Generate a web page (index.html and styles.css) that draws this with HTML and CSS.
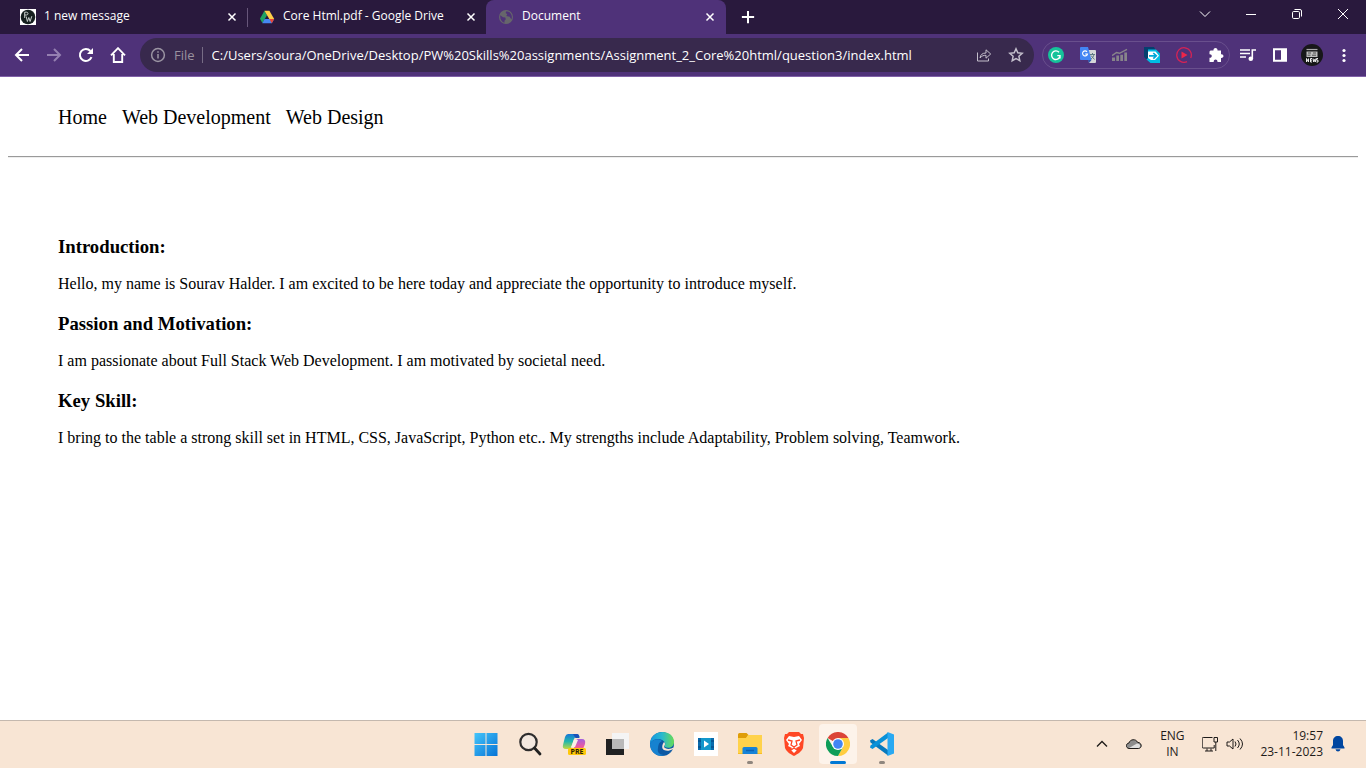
FILE: index.html
```html
<!DOCTYPE html>
<html lang="en">
<head>
<meta charset="utf-8">
<meta name="viewport" content="width=device-width, initial-scale=1">
<title>Document</title>
<link rel="stylesheet" href="styles.css">
</head>
<body>
<div class="desktop">
  <header class="browser">
    <div class="tabstrip">
      <div class="tab">
        <svg class="icon" viewBox="0 0 16 16"><path fill="#fff" d="M0 0h16v16H0z"/><circle cx="8" cy="8" r="7.3" fill="#16201f"/><path d="M4.700 9V3.200h1.800c2 0 2 2.800 0 2.800H4.700M6.200 7.500l1.200 5 1.400-4 1.300 4 1.700-5.300" fill="none" stroke="#c9cfcd" stroke-width="1"/></svg>
        <span class="tab-title">1 new message</span>
        <button class="tab-close" aria-label="Close 1 new message"><svg viewBox="0 0 16 16"><path d="M4.500 4.500l7 7M11.500 4.500l-7 7"/></svg></button>
      </div>
      <div class="tab tab-divided">
        <svg class="icon" viewBox="0 0 16 16"><path fill="#1fa463" d="M5.400 1.800 1 9.800l2.400 4.300L8 6.300z"/><path fill="#ffcf48" d="M5.400 1.800h5l4.800 8.300h-4.900z"/><path fill="#4688f4" d="M5.600 10.100h9.600l-2.400 4.100H3.300z"/><path fill="#ea4335" d="M10.400 10.100h4.800l-2.400 4.100z"/></svg>
        <span class="tab-title">Core Html.pdf - Google Drive</span>
        <button class="tab-close" aria-label="Close Core Html.pdf"><svg viewBox="0 0 16 16"><path d="M4.500 4.500l7 7M11.500 4.500l-7 7"/></svg></button>
      </div>
      <div class="tab tab-active">
        <svg class="icon" viewBox="0 0 16 16"><circle cx="8" cy="8" r="7" fill="#66666b"/><path d="M2.300 6.200 5 8.300l2.300.3.500 1.700-1.300 1.400v2.100C3.500 13.100 1.800 10 2.300 6.200zM8.400 2.200 7.600 4 9.300 5.200l-1 1.700 3.400.9 1.700 2.600c1.500-3.600-.6-8-5-8.200z" fill="#4f3279"/></svg>
        <span class="tab-title">Document</span>
        <button class="tab-close" aria-label="Close Document"><svg viewBox="0 0 16 16"><path d="M4.500 4.500l7 7M11.500 4.500l-7 7"/></svg></button>
      </div>
      <button class="new-tab" aria-label="New tab"><svg viewBox="0 0 16 16"><path d="M8 1v14M1 8h14" stroke-width="2.300"/></svg></button>
      <div class="window-controls">
        <button aria-label="Search tabs"><svg viewBox="0 0 16 16"><path d="M3 5.500l5 5 5-5"/></svg></button>
        <button aria-label="Minimize"><svg viewBox="0 0 16 16"><path d="M3 8.500h10"/></svg></button>
        <button aria-label="Restore"><svg viewBox="0 0 16 16"><rect x="3.500" y="5.500" width="7" height="7" rx="1.200"/><path d="M5.500 3.500H11q1.500 0 1.500 1.500v5.500"/></svg></button>
        <button aria-label="Close"><svg viewBox="0 0 16 16"><path d="M3 3l10 10M13 3 3 13"/></svg></button>
      </div>
    </div>
    <div class="toolbar">
      <div class="nav-buttons">
        <button aria-label="Back"><svg viewBox="0 0 16 16"><path d="M15 8H2M8 2 2 8l6 6" stroke-width="2"/></svg></button>
        <button class="dim" aria-label="Forward"><svg viewBox="0 0 16 16"><path d="M1 8h13M8 2l6 6-6 6" stroke-width="2"/></svg></button>
        <button aria-label="Reload"><svg viewBox="0 0 16 16"><path d="M13.500 10.200A6 6 0 1 1 12.400 4" stroke-width="2"/><path class="solid" d="M15 1v6H9z"/></svg></button>
        <button aria-label="Home"><svg viewBox="0 0 16 16"><path d="M1 8.300 8 1.200l7 7.100M3.800 7v8h8.400V7" stroke-width="1.900"/></svg></button>
      </div>
      <div class="omnibox">
        <svg class="icon info" viewBox="0 0 16 16"><circle cx="8" cy="8" r="6.400"/><path d="M8 7v4.500M8 4.200v1.600"/></svg>
        <label class="scheme" for="url">File</label>
        <input class="url" id="url" type="text" value="C:/Users/soura/OneDrive/Desktop/PW%20Skills%20assignments/Assignment_2_Core%20html/question3/index.html">
        <button aria-label="Share"><svg viewBox="0 0 16 16"><path d="M1.500 5.500V14h11v-2.500M4 11c.5-3.300 2.300-5 6-5V2.800L14.700 7 10 11.200V8.300C7.500 8.200 5.700 9 4 11z"/></svg></button>
        <button aria-label="Bookmark"><svg viewBox="0 0 16 16"><path d="M8 1.800l1.800 4 4.400.5-3.300 3 .9 4.400L8 11.500l-3.800 2.200.9-4.400-3.300-3 4.400-.5z" stroke-width="1.500"/></svg></button>
      </div>
      <div class="extensions">
        <button aria-label="Grammar checker"><svg viewBox="0 0 16 16"><circle cx="8" cy="8" r="8" fill="#15c39a" stroke="none"/><path d="M11 5.200a4.300 4.300 0 1 0 1 4.300V8.600H9.300M12 8.600v3" stroke-width="1.400"/></svg></button>
        <button aria-label="Translate"><svg viewBox="0 0 16 16" class="art"><path fill="#d5d7d8" d="M7 3h8q1 0 1 1v11q0 1-1 1H9z"/><path fill="#4285f4" d="M1 0h7l3.500 13H1q-1 0-1-1V1q0-1 1-1z"/><path fill="#2855ae" d="m8 13 3.500 0L9 16z"/><path d="M7 4.800A2.500 2.500 0 1 0 7.500 7H5.200" fill="none" stroke="#fff" stroke-width="1.100"/><path d="M10 7.500h5M12.500 6v1.500M14 7.500c-.5 2-1.500 3.500-3.300 4.700M11 8.500l3.500 4" fill="none" stroke="#607b84"/></svg></button>
        <button aria-label="Analytics"><svg viewBox="0 0 16 16" class="art"><path fill="#87848a" d="M0 10.500h3V14H0zM4.300 8.500h2.700V14H4.300zM8.300 7.800H11V14H8.300zM12.300 5.500H15V14h-2.700z"/><path d="M0 8.700 4.500 5.500l3 .8 7.500-4" fill="none" stroke="#87848a" stroke-width="1.500"/></svg></button>
        <button aria-label="Screen share"><svg viewBox="0 0 16 16" class="art"><path fill="#063f6e" d="M0 0h10l2 4-8 8H2L0 10z"/><path fill="#00bde3" d="M4 2.500h8l4 4V16H6.500L2.500 12.500 4 11z"/><path fill="#fff" d="M4 4.500h7.500L15 8.800l-4 4.200H7l-3-2z"/><path d="M5 8.800h7M9.300 6l3 2.800-3 2.800" fill="none" stroke="#00a9d8" stroke-width="1.700"/></svg></button>
        <button aria-label="Video recorder"><svg viewBox="0 0 16 16" class="art"><path d="M11 14.700A7.300 7.300 0 1 1 14.700 11" fill="none" stroke="#d42355" stroke-width="1.300"/><path fill="#ef2549" d="M5.500 4.500 11.500 8l-6 3.500z"/></svg></button>
        <button aria-label="Extensions"><svg viewBox="0 0 16 16" class="art"><path fill="#fff" d="M2.500 3.500h3C5 0 10 0 9.500 3.500H13v3.700c3.300-.4 3.300 4.100 0 3.800V15H9.500c.2-3.400-4-3.400-3.800 0H1.500v-4.300c3 .2 3-3.800 0-3.500V4.500z"/></svg></button>
      </div>
      <div class="browser-actions">
        <button aria-label="Media controls"><svg viewBox="0 0 16 16" class="art"><path d="M0 3h10M0 6.500h10M0 10h6M12.300 12V3H16" fill="none" stroke="#fff" stroke-width="1.600"/><circle cx="10.800" cy="11.800" r="2.300" fill="#fff"/></svg></button>
        <button aria-label="Side panel"><svg viewBox="0 0 16 16"><path d="M2 2.300h12v11.400H2z" stroke-width="2"/><path class="solid" d="M9 2h5v12H9z"/></svg></button>
        <button aria-label="Profile"><svg class="avatar" viewBox="0 0 22 22"><circle cx="11" cy="11" r="11" fill="#171719"/><path d="M5.500 5.500h11" stroke="#aaa" stroke-width="1.200"/><path fill="#bdbdbd" d="M5.500 7.500h11V13h-11z"/><path d="M7 9h3M12 9h3M6.500 11.200h3M11 11.200h4" stroke="#444" stroke-width=".9"/><path d="M5.500 18v-3.500l2 3.500v-3.500M11 14.500H9.500V18H11M9.500 16.200H11M12 14.500l.7 3.500.8-2.500.8 2.500.6-3.500M17 14.500h-1.400v1.700H17V18h-1.500" fill="none" stroke="#eee"/></svg></button>
        <button aria-label="Menu"><svg viewBox="0 0 16 16" class="art"><circle cx="8" cy="3.500" r="1.600" fill="#fff"/><circle cx="8" cy="8.500" r="1.600" fill="#fff"/><circle cx="8" cy="13.500" r="1.600" fill="#fff"/></svg></button>
      </div>
    </div>
  </header>

  <main class="page">
    <nav class="site-nav">
      <a href="#home">Home</a>
      <a href="#development">Web Development</a>
      <a href="#design">Web Design</a>
    </nav>
    <hr class="rule">
    <section class="article">
      <h3>Introduction:</h3>
      <p>Hello, my name is Sourav Halder. I am excited to be here today and appreciate the opportunity to introduce myself.</p>
      <h3>Passion and Motivation:</h3>
      <p>I am passionate about Full Stack Web Development. I am motivated by societal need.</p>
      <h3>Key Skill:</h3>
      <p>I bring to the table a strong skill set in HTML, CSS, JavaScript, Python etc.. My strengths include Adaptability, Problem solving, Teamwork.</p>
    </section>
  </main>

  <footer class="taskbar">
    <div class="apps">
      <button aria-label="Start"><svg viewBox="0 0 24 24"><defs><linearGradient id="win" x1="0" y1="0" x2="1" y2="1"><stop stop-color="#45c5fa"/><stop offset="1" stop-color="#0673d6"/></linearGradient></defs><path fill="url(#win)" d="M.5 1h11v11H.5zM12.500 1h11v11h-11zM.5 13h11v11H.5zM12.500 13h11v11h-11z"/></svg></button>
      <button aria-label="Search"><svg viewBox="0 0 24 24"><circle cx="10.500" cy="10" r="8.200" fill="#f3e8df" stroke="#2e2d2d" stroke-width="2.200"/><path d="m16.500 16 5.500 6" stroke="#222" stroke-width="2.800" stroke-linecap="round"/></svg></button>
      <button aria-label="Copilot"><svg viewBox="0 0 24 24"><defs><linearGradient id="co1" x1="0" y1="0" x2="0" y2="1"><stop stop-color="#1776d8"/><stop offset=".5" stop-color="#22b7ad"/><stop offset="1" stop-color="#c0d83f"/></linearGradient><linearGradient id="co2" x1="0" y1="0" x2="0" y2="1"><stop stop-color="#a260df"/><stop offset=".6" stop-color="#ee5a9e"/><stop offset="1" stop-color="#fb993e"/></linearGradient></defs><path fill="url(#co1)" d="M6 2h9q2 0 2.500 3h-3q-2 0-3 3l-2 7q-1 2-3 2H4q-4 0-3-4L3 5q1-3 3-3z"/><path fill="#1c51b7" d="M11 2h4q2 0 2.500 4h-4z"/><path fill="url(#co2)" d="M16 7h4q4 0 3 5l-2 5q-1 3-3 3H9q2-1 3-4l2-7q.5-2 2-2z"/><path fill="#faf0e8" d="m12 8 4 0-3 7H9z"/><rect x="6" y="16" width="18" height="7" rx="1.500" fill="#ffc80a"/><text class="copilot-tag" x="15" y="22" text-anchor="middle">PRE</text></svg></button>
      <button aria-label="Task view"><svg viewBox="0 0 24 24"><path fill="#202122" d="M0 7h18v16H0z"/><path fill="#f4f4f4" d="M6 1h17v16H6z"/><path fill="#b9b9b9" d="M6 7h12v10H6z"/></svg></button>
      <button aria-label="Edge"><svg viewBox="0 0 24 24"><defs><linearGradient id="ed" x2="1"><stop stop-color="#1495df"/><stop offset=".5" stop-color="#29b9cf"/><stop offset="1" stop-color="#67dc55"/></linearGradient></defs><circle cx="12" cy="12" r="12" fill="#0c59a4"/><path fill="url(#ed)" d="M0 12C1-4 24-3 24 10c0 5-5 7-9 5-2-1 1-2 0-4C13 6 3 5 0 12z"/><path fill="#1682d0" d="M0 12c2-5 9-6 12-3-5 2-5 9 0 12l3 2C6 26 0 19 0 12z"/><path fill="#f8e5d4" d="M14 10c3 3-2 4 1 6 3 1.500 6 1 8.500-.5l.5 2-4 3c-7 0-10-5-6-10.500z"/><path fill="#0c59a4" d="M11 11c-2 7 6 10 12 6-4 8-17 8-15-1q.5-3 3-5z"/></svg></button>
      <button aria-label="Media editor"><svg viewBox="0 0 24 24"><path fill="#fff" d="M0 0h24v24H0z"/><path fill="#0a6bad" d="M4 6h16v12H4z"/><path fill="#1297cb" d="M7 6h10v12H7z"/><path fill="#075693" d="M4 8h3v2H4zM4 14h3v2H4zM17 8h3v2h-3zM17 14h3v2h-3z"/><path fill="#fff" d="m10 8.500 5 3.500-5 3.500z"/></svg></button>
      <button class="running" aria-label="File Explorer"><svg viewBox="0 0 24 24"><path fill="#df9d08" d="M1.500 1h7l2 2-2 3H0V2.500Q0 1 1.500 1z"/><path fill="#ffd24b" d="M0 6h8l2-3h14v19H0z"/><path fill="#f8bd25" d="M0 21h24v1H0z"/><path fill="#1683d8" d="M6 15h12q1.500 0 1.500 1.500V22h-15v-5.500Q4.500 15 6 15z"/><path d="M8 18.500h8" stroke="#0c61b2" stroke-width="1.500"/></svg></button>
      <button aria-label="Brave"><svg viewBox="0 0 24 24"><path fill="#ff4724" d="M7 0h10l2 2 2 0 1 4-1 10c-1 3-5 6-9 8-4-2-8-5-9-8L2 6l1-4h2z"/><path fill="#fff" d="m7 4 5 1 5-1 3 4-3 4 1 2-4 2 1 2-3 3-3-3 1-2-4-2 1-2-3-4z"/><path d="m6 8 4 1-1 4 3 2 3-2-1-4 4-1M9 18l3-2 3 2" fill="none" stroke="#ff4724" stroke-width="1.300"/></svg></button>
      <button class="selected" aria-label="Chrome"><svg viewBox="0 0 24 24"><path fill="#db4437" d="M12 12 1.600 6A12 12 0 0 1 22.400 6z"/><path fill="#ffcd40" d="M12 6h10.400A12 12 0 0 1 12 24l5-9z"/><path fill="#0f9d58" d="M1.600 6 7 15l10 0-5 9A12 12 0 0 1 1.600 6z"/><circle cx="12" cy="12" r="6" fill="#fff"/><circle cx="12" cy="12" r="4.800" fill="#4285f4"/></svg></button>
      <button class="running" aria-label="Visual Studio Code"><svg viewBox="0 0 24 24"><path fill="#0879bd" d="M0 8.500 2.500 7 18 18v5.500L.5 10.500z"/><path fill="#0a91d8" d="M0 15.500 2.500 17 18 6V.5L.5 13.500z"/><path fill="#29a9f2" d="m17.500 0 6.500 2.500v19L17.500 24z"/></svg></button>
    </div>
    <div class="tray">
      <button class="tray-icon" aria-label="Show hidden icons"><svg viewBox="0 0 16 16"><path d="m3 10.500 5-5 5 5" stroke-width="1.300"/></svg></button>
      <button class="tray-icon" aria-label="OneDrive"><svg viewBox="0 0 16 16"><path fill="#8d8d8d" d="M3 12.500C-.5 12-.5 7.500 3 7c1-4 7-4.500 8.500-.7 4.500.2 5 5.700 1 6.200z"/><path fill="#e0e0e0" stroke="none" d="m3 12 8-4.500c3 0 4.500 3 1.500 4.500z"/></svg></button>
      <button class="language">ENG<br>IN</button>
      <button class="status" aria-label="Network and volume"><svg viewBox="0 0 16 16"><path d="M10.500 1.500H1.200q-1 0-1 1V11q0 1 1 1h11V9M5 12.500V15M9 12.500V15M3 15h8M12 1.500h3.500V6H12zM13.800 6v9"/></svg><svg viewBox="0 0 16 16"><path d="M0 6h2.500L6 3v10L2.500 10H0zM8 5.500q2 2.500 0 5M10.500 4q3.500 4 0 8M13 2.500q5 5.500 0 11"/></svg></button>
      <button class="clock">19:57<br>23-11-2023</button>
      <button class="bell" aria-label="Notifications"><svg viewBox="0 0 16 16"><path fill="#0046a0" stroke="none" d="M8 0c3 0 5 2 5 5v4l1.500 2.500v1h-13v-1L3 9V5c0-3 2-5 5-5zM5.500 13.200h5Q10 15.500 8 15.500t-2.500-2.300z"/></svg></button>
    </div>
  </footer>
</div>
</body>
</html>
```
FILE: styles.css
```css
* { box-sizing: border-box; }

body {
  margin: 0;
  background: #fff;
  color: #000;
}

button {
  display: flex;
  align-items: center;
  justify-content: center;
  flex: none;
  padding: 0;
  border: 0;
  background: transparent;
  color: inherit;
  font: inherit;
}

svg {
  display: block;
  flex: none;
  width: 16px;
  height: 16px;
  fill: none;
  stroke: currentColor;
}

svg .solid { fill: currentColor; stroke: none; }
.art, .avatar, .apps svg, .tab .icon { stroke: none; }

.desktop {
  display: flex;
  flex-direction: column;
  min-height: 100vh;
}

/* Browser frame */
.browser {
  background: #4f3279;
  border-bottom: 1px solid #8061a8;
  color: #fff;
  font-family: "Open Sans", "Noto Sans", sans-serif;
  font-size: 12px;
}

.tabstrip {
  display: flex;
  height: 34px;
  padding-left: 8px;
  background: #29193d;
}

.tab {
  display: flex;
  align-items: center;
  flex: 0 1 239px;
  gap: 8px;
  min-width: 0;
  padding: 0 7px 0 12px;
}

.tab-divided {
  background: linear-gradient(#67567a, #67567a) no-repeat left center / 1px 19px;
}

.tab-active {
  flex-basis: 240px;
  padding-right: 8px;
  background: #4f3279;
  border-radius: 8px 8px 0 0;
}

.tab-title {
  flex: 1;
  overflow: hidden;
  line-height: 18px;
  padding-bottom: 2px;
  white-space: nowrap;
}

.tab-close svg { stroke-width: 1.5; }
.new-tab { width: 44px; }
.new-tab svg { width: 14px; height: 14px; }

.window-controls { display: flex; margin-left: auto; }
.window-controls button { width: 46px; height: 28px; }

.toolbar {
  display: flex;
  align-items: center;
  height: 42px;
  padding: 0 6px;
}

.nav-buttons, .browser-actions { display: flex; }
.nav-buttons button, .browser-actions button { width: 32px; height: 32px; }
.dim { color: #9580b1; }

.omnibox {
  display: flex;
  align-items: center;
  flex: 1;
  min-width: 0;
  height: 34px;
  margin: 0 8px 0 6px;
  padding: 0 2px 0 10px;
  border-radius: 17px;
  background: #38294d;
  color: #c4bfcc;
  font-size: 13px;
}

.omnibox button { width: 32px; height: 32px; }
.info { color: #9b95a3; stroke-width: 1.5; }

.scheme {
  margin: 0 9px 0 8px;
  padding-right: 7px;
  border-right: 1px solid #776c85;
  color: #99929f;
  line-height: 16px;
}

.url {
  flex: 1;
  min-width: 0;
  padding: 0;
  border: 0;
  outline: 0;
  background: transparent;
  color: #fff;
  font: inherit;
}

.extensions {
  display: flex;
  align-items: center;
  gap: 16px;
  height: 28px;
  margin-right: 2px;
  padding: 0 5px;
  border: 1px solid #694f8d;
  border-radius: 14px;
}

.avatar { width: 22px; height: 22px; }

/* Web page */
.page {
  flex: 1;
  padding: 28px 8px;
  font-family: "Liberation Serif", "Times New Roman", serif;
  font-size: 16px;
}

.site-nav {
  display: flex;
  gap: 15px;
  padding: 0 50px;
  font-size: 20px;
  line-height: 24px;
}

.site-nav a { color: #000; text-decoration: none; }

.rule {
  margin: 27px 0 0;
  border: solid;
  border-width: 1px 0;
  border-color: #9a9a9a #eee #eee #9a9a9a;
}

.article { padding: 78px 50px 0; }

.article h3 {
  margin: 0 0 18px;
  line-height: 21px;
}

.article p { margin: 0 0 20px; line-height: 18px; }

/* Taskbar */
.taskbar {
  display: grid;
  grid-template-columns: 1fr auto 1fr;
  align-items: center;
  height: 48px;
  padding: 0 0 2px 2px;
  border-top: 1px solid #c4b8ae;
  background: #f8e5d4;
  color: #1e1b19;
  font-family: "Open Sans", "Noto Sans", sans-serif;
  font-size: 12px;
  line-height: 16px;
}

.apps { display: flex; grid-column: 2; }

.apps button {
  position: relative;
  width: 44px;
  height: 40px;
}

.apps svg { width: 24px; height: 24px; }

.copilot-tag {
  fill: #2c2100;
  font: bold 7px "Open Sans", sans-serif;
}

.apps .selected {
  width: 38px;
  margin: 0 3px;
  border-radius: 4px;
  background: #fdf3ea;
}

.running::after, .selected::after {
  content: "";
  position: absolute;
  bottom: 0;
  left: 50%;
  width: 6px;
  height: 3px;
  margin-left: -3px;
  border-radius: 2px;
  background: #8f867e;
}

.selected::after {
  width: 16px;
  margin-left: -8px;
  background: #0078d4;
}

.tray {
  display: flex;
  align-items: center;
  justify-content: flex-end;
  padding-right: 20px;
}

.tray-icon { width: 32px; height: 40px; }
.language { width: 44px; text-align: center; }
.status { gap: 8px; margin-left: 8px; }
.status svg:last-child { width: 18px; }
.clock { margin: 0 7px 0 16px; text-align: right; }
```
